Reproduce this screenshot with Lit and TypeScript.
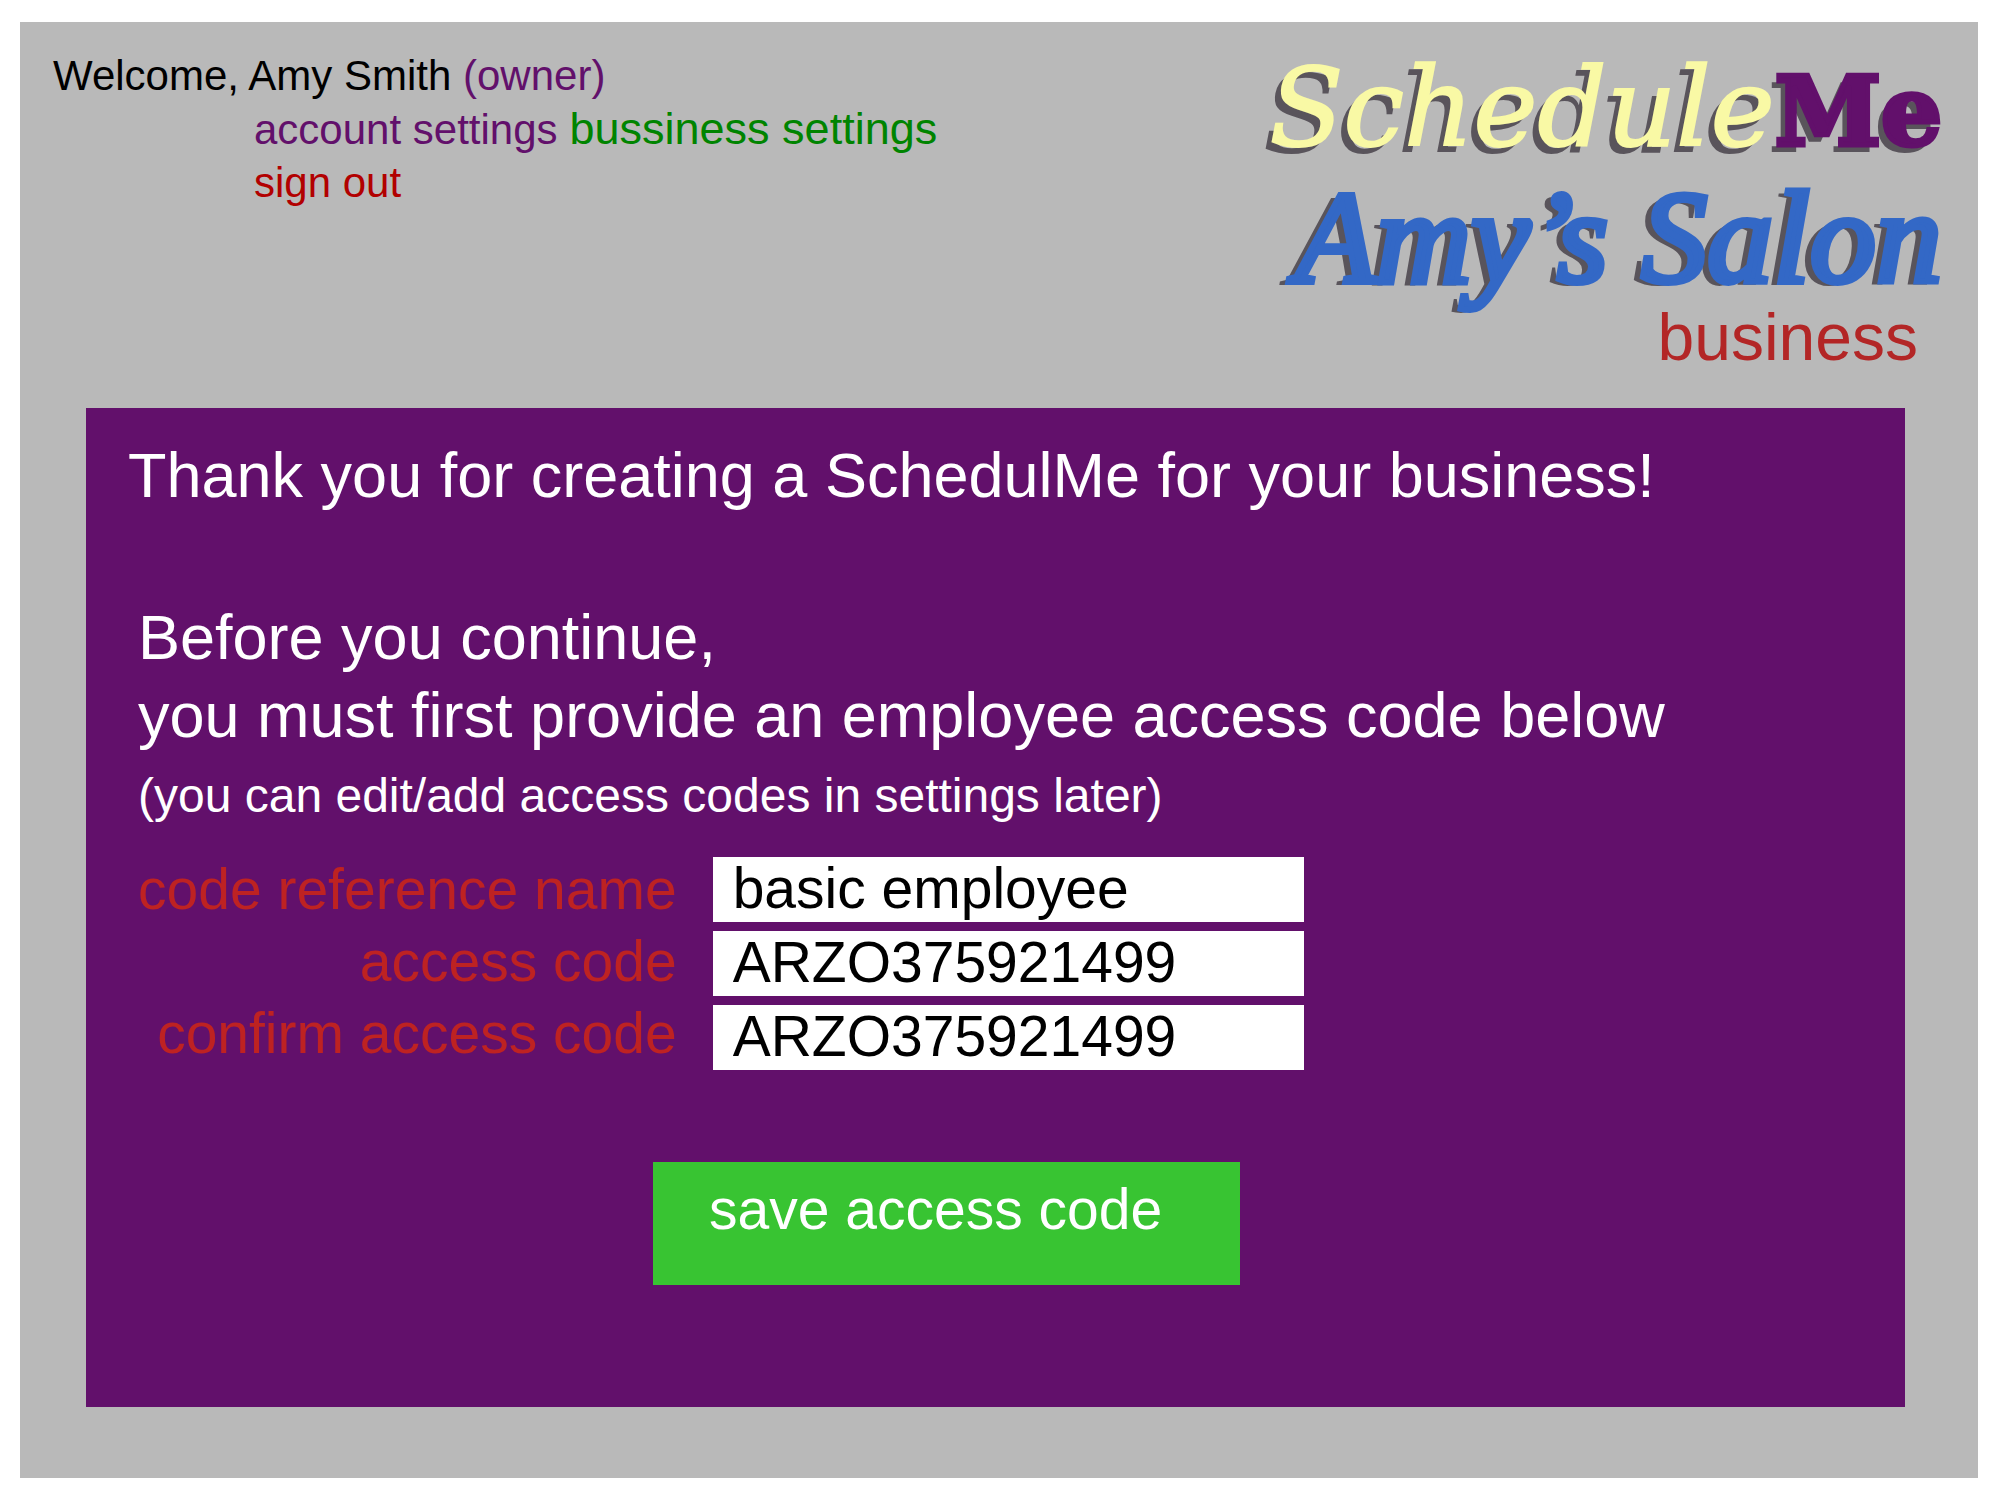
import { LitElement, html, css } from "lit";
import { customElement, state } from "lit/decorators.js";

@customElement("brand-logo")
class BrandLogo extends LitElement {
  static styles = css`
    :host {
      display: block;
    }
    .logo {
      display: flex;
      flex-direction: column;
      align-items: flex-end;
      white-space: nowrap;
    }
    .product {
      display: flex;
      align-items: baseline;
      font-family: "DejaVu Serif", serif;
      line-height: 100px;
      text-shadow: -7px 7px #59545b;
    }
    .schedule {
      font-size: 108px;
      font-style: italic;
      color: #f9f9a5;
      -webkit-text-stroke: 2px #f9f9a5;
    }
    .me {
      font-size: 96px;
      font-weight: bold;
      line-height: 80px;
      color: #62106b;
      -webkit-text-stroke: 5px #62106b;
    }
    .shop {
      padding-top: 10px;
      font-family: "Liberation Serif", "Times New Roman", serif;
      font-size: 132px;
      font-style: italic;
      line-height: 139px;
      color: #3368c6;
      -webkit-text-stroke: 6px #3368c6;
      text-shadow: -9px 3px #59545b;
    }
    .kind {
      font-size: 66px;
      line-height: 60px;
      padding-right: 24px;
      color: #b32626;
    }
  `;

  render() {
    return html`
      <div class="logo">
        <div class="product"><span class="schedule">Schedule</span><span class="me">Me</span></div>
        <div class="shop">Amy’s Salon</div>
        <div class="kind">business</div>
      </div>
    `;
  }
}

@customElement("app-root")
class AppRoot extends LitElement {
  static styles = css`
    :host {
      display: flex;
      box-sizing: border-box;
      min-height: 100vh;
      padding: 22px 22px 22px 20px;
      background: #fff;
      font-family: "Liberation Sans", Arial, sans-serif;
    }
    .page {
      flex: 1;
      display: flex;
      flex-direction: column;
      background: #b9b9b9;
    }
    .header {
      display: flex;
      justify-content: space-between;
      min-height: 386px;
      box-sizing: border-box;
      padding: 27px 36px 0 33px;
    }
    .account {
      font-size: 42px;
      line-height: 53px;
      color: #000;
    }
    .account p {
      margin: 0;
    }
    .links {
      display: grid;
      grid-template-columns: auto auto;
      justify-content: start;
      align-items: baseline;
      column-gap: 12px;
      padding-left: 201px;
    }
    a {
      color: inherit;
      text-decoration: none;
    }
    .owner,
    .account-link {
      color: #62106b;
    }
    .business-link {
      font-size: 45px;
      color: #008400;
    }
    .sign-out {
      color: #b20000;
    }
    .logo {
      padding-top: 9px;
    }
    .panel {
      flex: 1;
      margin: 0 73px 71px 66px;
      padding: 28px 42px 80px;
      background: #62106b;
      color: #fff;
    }
    h1,
    .lead {
      margin: 0;
      font-size: 63px;
      font-weight: normal;
      line-height: 78px;
    }
    .body {
      padding: 84px 0 0 10px;
    }
    .note {
      margin: 6px 0 21px;
      font-size: 48px;
      line-height: 72px;
    }
    .fields {
      display: flex;
      gap: 36px;
    }
    .labels {
      display: flex;
      flex-direction: column;
      align-items: flex-end;
      font-size: 57px;
      line-height: 72px;
      color: #be2222;
    }
    .inputs {
      display: flex;
      flex-direction: column;
      gap: 9px;
      flex: 0 1 591px;
      padding-top: 4px;
    }
    input {
      box-sizing: border-box;
      width: 100%;
      height: 65px;
      margin: 0;
      padding: 0 20px 3px;
      border: 0;
      border-radius: 0;
      background: #fff;
      color: #000;
      font: inherit;
      font-size: 57px;
    }
    .save {
      display: block;
      width: 587px;
      max-width: 100%;
      margin: 92px 0 0 515px;
      padding: 11px 56px 40px;
      border: 0;
      background: #38c432;
      color: #fff;
      font: inherit;
      font-size: 57px;
      line-height: 72px;
      text-align: left;
      white-space: nowrap;
    }
  `;

  @state() private fields = [
    { id: "code-name", label: "code reference name", value: "basic employee" },
    { id: "code", label: "access code", value: "ARZO375921499" },
    { id: "code-confirm", label: "confirm access code", value: "ARZO375921499" },
  ];

  render() {
    return html`
      <div class="page">
        <header class="header">
          <nav class="account">
            <p>Welcome, Amy Smith <span class="owner">(owner)</span></p>
            <div class="links">
              <a class="account-link" href="#account">account settings</a>
              <a class="business-link" href="#business">bussiness settings</a>
              <a class="sign-out" href="#sign-out">sign out</a>
            </div>
          </nav>
          <brand-logo class="logo"></brand-logo>
        </header>
        <main class="panel">
          <h1>Thank you for creating a SchedulMe for your business!</h1>
          <form class="body" @submit=${(e: Event) => e.preventDefault()}>
            <p class="lead">Before you continue,<br />you must first provide an employee access code below</p>
            <p class="note">(you can edit/add access codes in settings later)</p>
            <div class="fields">
              <div class="labels">
                ${this.fields.map((f) => html`<label for=${f.id}>${f.label}</label>`)}
              </div>
              <div class="inputs">
                ${this.fields.map((f) => html`<input id=${f.id} type="text" .value=${f.value} />`)}
              </div>
            </div>
            <button class="save" type="submit">save access code</button>
          </form>
        </main>
      </div>
    `;
  }
}
